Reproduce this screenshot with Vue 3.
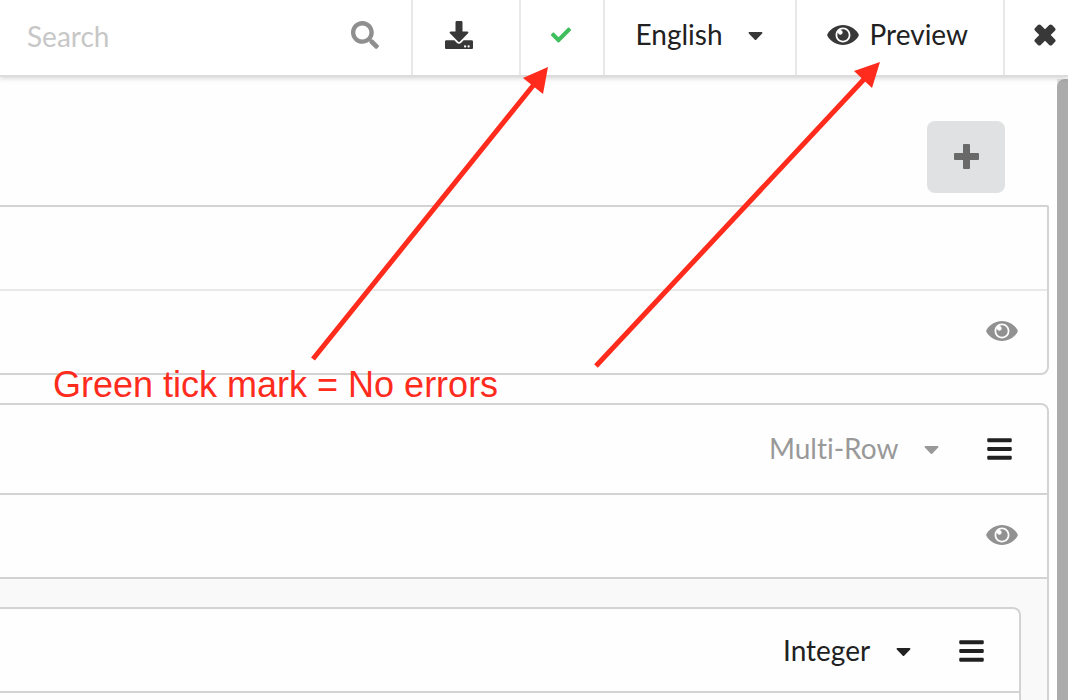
<script setup>
import { ref } from 'vue'

const query = ref('')
const language = ref('English')
const groupType = ref('Multi-Row')
const fieldType = ref('Integer')

const eye =
  'M569.354 231.631C512.969 135.949 407.81 72 288 72 168.14 72 63.004 135.994 6.646 231.631a47.999 47.999 0 0 0 0 48.739C63.031 376.051 168.19 440 288 440c119.86 0 224.996-63.994 281.354-159.631a47.997 47.997 0 0 0 0-48.738zM288 392c-75.162 0-136-60.827-136-136 0-75.162 60.826-136 136-136 75.162 0 136 60.826 136 136 0 75.162-60.826 136-136 136zm104-136c0 57.438-46.562 104-104 104s-104-46.562-104-104c0-17.708 4.431-34.379 12.236-48.973l-.001.032c0 23.651 19.173 42.823 42.824 42.823s42.824-19.173 42.824-42.823c0-23.651-19.173-42.823-42.824-42.823l-.032.001C253.621 156.431 270.292 152 288 152c57.438 0 104 46.562 104 104z'
const caret =
  'M31.3 192h257.3c17.8 0 26.7 21.5 14.1 34.1L174.1 354.8c-7.8 7.8-20.5 7.8-28.3 0L17.2 226.1C4.6 213.5 13.5 192 31.3 192z'
const bars =
  'M16 132h416c8.837 0 16-7.163 16-16V76c0-8.837-7.163-16-16-16H16C7.163 60 0 67.163 0 76v40c0 8.837 7.163 16 16 16zm0 160h416c8.837 0 16-7.163 16-16v-40c0-8.837-7.163-16-16-16H16c-8.837 0-16 7.163-16 16v40c0 8.837 7.163 16 16 16zm0 160h416c8.837 0 16-7.163 16-16v-40c0-8.837-7.163-16-16-16H16c-8.837 0-16 7.163-16 16v40c0 8.837 7.163 16 16 16z'
</script>

<template>
  <div class="page">
    <header class="toolbar">
      <label class="search">
        <input v-model="query" type="text" placeholder="Search" aria-label="Search" />
        <svg class="icon-search" viewBox="0 0 512 512" aria-hidden="true">
          <path d="M505 442.7L405.3 343c-4.5-4.5-10.6-7-17-7H372c27.6-35.3 44-79.7 44-128C416 93.1 322.9 0 208 0S0 93.1 0 208s93.1 208 208 208c48.3 0 92.7-16.4 128-44v16.3c0 6.4 2.5 12.5 7 17l99.7 99.7c9.4 9.4 24.6 9.4 33.9 0l28.3-28.3c9.4-9.4 9.4-24.6.1-34zM208 336c-70.7 0-128-57.2-128-128 0-70.7 57.2-128 128-128 70.7 0 128 57.2 128 128 0 70.7-57.2 128-128 128z" />
        </svg>
      </label>
      <button class="cell download" type="button" aria-label="Download">
        <svg viewBox="0 0 512 512" aria-hidden="true">
          <path d="M216 0h80c13.3 0 24 10.7 24 24v168h87.7c17.8 0 26.7 21.5 14.1 34.1L269.7 378.3c-7.5 7.5-19.8 7.5-27.3 0L90.1 226.1c-12.6-12.6-3.7-34.1 14.1-34.1H192V24c0-13.3 10.7-24 24-24zm296 376v112c0 13.3-10.7 24-24 24H24c-13.3 0-24-10.7-24-24V376c0-13.3 10.7-24 24-24h146.7l49 49c20.1 20.1 52.5 20.1 72.6 0l49-49H488c13.3 0 24 10.7 24 24zm-124 88c0-11-9-20-20-20s-20 9-20 20 9 20 20 20 20-9 20-20zm64 0c0-11-9-20-20-20s-20 9-20 20 9 20 20 20 20-9 20-20z" />
        </svg>
      </button>
      <button class="cell status" type="button" aria-label="No errors">
        <svg viewBox="0 0 512 512" aria-hidden="true">
          <path d="M173.898 439.404l-166.4-166.4c-9.997-9.997-9.997-26.206 0-36.204l36.203-36.204c9.997-9.998 26.207-9.998 36.204 0L192 312.69 432.095 72.596c9.997-9.997 26.207-9.997 36.204 0l36.203 36.204c9.997 9.997 9.997 26.206 0 36.204l-294.4 294.401c-9.998 9.997-26.207 9.997-36.204-.001z" />
        </svg>
      </button>
      <div class="cell language">
        <div class="dropdown">
          <select v-model="language" aria-label="Language">
            <option>English</option>
          </select>
          <svg class="caret" viewBox="0 0 320 512" aria-hidden="true"><path :d="caret" /></svg>
        </div>
      </div>
      <button class="cell preview" type="button">
        <svg class="eye" viewBox="0 0 576 512" aria-hidden="true"><path :d="eye" /></svg>
        <span>Preview</span>
      </button>
      <button class="cell close" type="button" aria-label="Close">
        <svg viewBox="0 0 22 22" aria-hidden="true">
          <g transform="rotate(45 11 11)">
            <rect x="-1" y="7" width="24" height="8" rx="2" />
            <rect x="7" y="-1" width="8" height="24" rx="2" />
          </g>
        </svg>
      </button>
    </header>

    <div class="body">
      <main class="content">
        <div class="actions">
          <button class="add" type="button" aria-label="Add">
            <svg viewBox="0 0 25 25" aria-hidden="true">
              <rect x="0" y="9" width="25" height="7" rx="1" />
              <rect x="9" y="0" width="7" height="25" rx="1" />
            </svg>
          </button>
        </div>

        <section class="card attached">
          <div class="row"></div>
          <div class="row light">
            <button class="icon-button" type="button" aria-label="Toggle visibility">
              <svg class="eye" viewBox="0 0 576 512" aria-hidden="true"><path :d="eye" /></svg>
            </button>
          </div>
        </section>

        <section class="card group">
          <div class="row head">
            <div class="dropdown muted">
              <select v-model="groupType" aria-label="Group type">
                <option>Multi-Row</option>
              </select>
              <svg class="caret" viewBox="0 0 320 512" aria-hidden="true"><path :d="caret" /></svg>
            </div>
            <button class="icon-button" type="button" aria-label="Group menu">
              <svg class="bars" viewBox="0 0 448 512" aria-hidden="true"><path :d="bars" /></svg>
            </button>
          </div>
          <div class="row">
            <button class="icon-button" type="button" aria-label="Toggle visibility">
              <svg class="eye" viewBox="0 0 576 512" aria-hidden="true"><path :d="eye" /></svg>
            </button>
          </div>
          <div class="nested">
            <div class="card inner">
              <div class="row menu-row">
                <div class="dropdown">
                  <select v-model="fieldType" aria-label="Field type">
                    <option>Integer</option>
                  </select>
                  <svg class="caret" viewBox="0 0 320 512" aria-hidden="true"><path :d="caret" /></svg>
                </div>
                <button class="icon-button" type="button" aria-label="Field menu">
                  <svg class="bars" viewBox="0 0 448 512" aria-hidden="true"><path :d="bars" /></svg>
                </button>
              </div>
              <div class="row"></div>
            </div>
          </div>
        </section>
      </main>
      <div class="track"><div class="thumb"></div></div>
    </div>

    <svg class="arrows" width="900" height="380" aria-hidden="true">
      <path d="M313 359L536 82M596 366L867 76" />
      <polygon points="548,67 523,78 543,94" />
      <polygon points="880,62 854,71 872,88" />
    </svg>
    <p class="note">Green tick mark = No errors</p>
  </div>
</template>

<style>
body {
  margin: 0;
  background: #fff;
}
</style>

<style scoped>
.page {
  position: relative;
  display: flex;
  flex-direction: column;
  height: 100vh;
  overflow: hidden;
  background: #fefefe;
  color: #212121;
  font-family: Lato, "Liberation Sans", sans-serif;
  font-size: 28px;
  font-variant-ligatures: none;
  line-height: 36px;
}
button,
input,
select {
  margin: 0;
  padding: 0;
  border: 0;
  background: none;
  color: inherit;
  font: inherit;
  font-variant-ligatures: none;
}
svg {
  display: block;
  flex: none;
  fill: currentColor;
}
.toolbar {
  position: relative;
  z-index: 1;
  display: flex;
  flex: none;
  height: 75px;
  border-bottom: 2px solid #dcdcdc;
  background: #fff;
  box-shadow: 0 2px 4px rgba(34, 36, 38, 0.15);
}
.search {
  display: flex;
  flex: 1;
  align-items: center;
  min-width: 0;
  padding: 0 32px 3px 27px;
}
.search input {
  flex: 1;
  min-width: 0;
  outline: 0;
}
.search input::placeholder {
  color: #c7c7c7;
  opacity: 1;
}
.icon-search {
  width: 28px;
  height: 28px;
  margin-bottom: 3px;
  color: #8f8f8f;
}
.cell {
  display: flex;
  align-items: center;
  box-sizing: border-box;
  padding-bottom: 5px;
  border-left: 2px solid #e8e8e8;
}
.cell svg {
  color: #383838;
}
.download {
  padding-left: 32px;
  padding-right: 46px;
}
.download svg {
  width: 28px;
  height: 28px;
}
.cell.status {
  padding-left: 30px;
  padding-right: 32px;
}
.cell.status svg {
  width: 20px;
  height: 20px;
  color: #3dbf5b;
}
.language {
  padding-left: 31px;
  padding-right: 32px;
}
.language .dropdown select {
  padding-right: 39px;
}
.preview {
  gap: 11px;
  padding-left: 30px;
  padding-right: 35px;
}
.preview span {
  padding-bottom: 2px;
}
.close {
  padding-left: 29px;
  padding-right: 12px;
}
.close svg {
  width: 22px;
  height: 22px;
}
.dropdown {
  position: relative;
  display: flex;
  align-items: center;
}
.dropdown select {
  appearance: none;
  padding-right: 40px;
  padding-bottom: 2px;
}
.caret {
  position: absolute;
  right: 0;
  width: 15px;
  height: 24px;
  pointer-events: none;
}
.muted {
  color: #999;
}
.eye {
  width: 32px;
  height: 28px;
}
.bars {
  width: 25px;
  height: 28px;
}
.body {
  display: flex;
  flex: 1;
  min-height: 0;
}
.content {
  flex: 1;
  min-width: 0;
  padding-right: 8px;
}
.actions {
  display: flex;
  justify-content: flex-end;
  padding: 44px 44px 12px 0;
}
.add {
  display: flex;
  align-items: center;
  justify-content: center;
  box-sizing: border-box;
  width: 78px;
  height: 72px;
  padding-bottom: 2px;
  border-radius: 8px;
  background: #e0e1e2;
  color: #696969;
}
.add svg {
  width: 25px;
  height: 25px;
}
.card {
  border: 2px solid #d3d3d3;
  border-left: 0;
  border-radius: 0 8px 8px 0;
  background: #fefefe;
}
.attached {
  border-top-right-radius: 2px;
  margin-bottom: 28px;
}
.row {
  display: flex;
  align-items: center;
  justify-content: flex-end;
  box-sizing: border-box;
  height: 82px;
  padding: 0 29px 3px 0;
}
.row + .row {
  height: 84px;
  border-top: 2px solid #d3d3d3;
}
.row + .row.light {
  border-top-color: #e8e8e8;
}
.row .eye {
  color: #919191;
}
.row.head,
.row.menu-row {
  gap: 48px;
  padding: 0 35px 0 0;
}
.row.head {
  height: 88px;
}
.row.menu-row {
  padding-top: 2px;
}
.nested {
  padding: 28px 26px 28px 0;
  border-top: 2px solid #d3d3d3;
  border-radius: 0 0 6px 0;
  background: #f9f9f9;
}
.track {
  flex: none;
  width: 11px;
  margin-top: 2px;
  background: #e4e4e4;
}
.thumb {
  height: 100%;
  border-top-left-radius: 8px;
  background: #ababab;
}
.arrows {
  position: absolute;
  z-index: 2;
  top: 0;
  left: 0;
  fill: #ff2b1c;
  pointer-events: none;
}
.arrows path {
  stroke: #ff2b1c;
  stroke-width: 5;
}
.note {
  position: absolute;
  z-index: 2;
  top: 364px;
  left: 53px;
  margin: 0;
  color: #ff2b1c;
  font-family: "Liberation Sans", sans-serif;
  font-size: 36px;
  line-height: 42px;
  white-space: nowrap;
}
</style>
